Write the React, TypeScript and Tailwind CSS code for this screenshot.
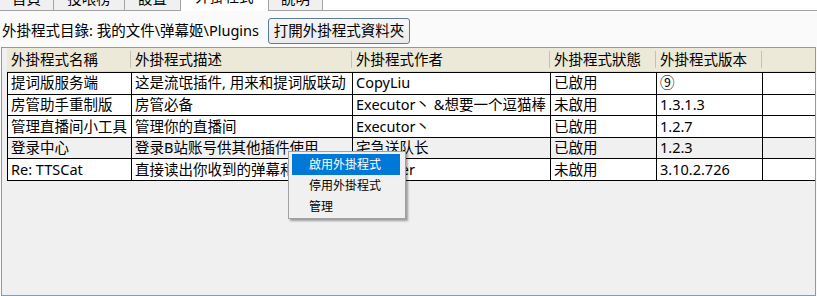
import type { ReactNode } from 'react'

const cols = 'grid-cols-[124px_221px_198px_106px_106px_1fr]'

const tabs = [
  { label: '首頁', w: 'w-[54px]' },
  { label: '投喂榜', w: 'w-[71px]' },
  { label: '設置', w: 'w-[56px]' },
  { label: '外掛程式', w: 'w-[88px]', active: true },
  { label: '說明', w: 'w-[54px]' },
]

const headers = ['外掛程式名稱', '外掛程式描述', '外掛程式作者', '外掛程式狀態', '外掛程式版本']

const plugins = [
  ['提词版服务端', '这是流氓插件, 用来和提词版联动', 'CopyLiu', '已啟用', '⑨'],
  ['房管助手重制版', '房管必备', 'Executor丶 &想要一个逗猫棒', '未啟用', '1.3.1.3'],
  ['管理直播间小工具', '管理你的直播间', 'Executor丶', '已啟用', '1.2.7'],
  ['登录中心', '登录B站账号供其他插件使用', '宅急送队长', '已啟用', '1.2.3'],
  ['Re: TTSCat', '直接读出你收到的弹幕和礼物', 'Elepover', '未啟用', '3.10.2.726'],
]

function Cell({ children, last }: { children?: ReactNode; last?: boolean }) {
  return (
    <div
      className={`flex items-center overflow-hidden whitespace-nowrap pl-[3px] ${last ? '' : 'border-r border-black'}`}
    >
      {children}
    </div>
  )
}

export default function App() {
  return (
    <div className="relative flex h-[296px] w-[817px] flex-col overflow-hidden bg-white font-['Noto_Sans','Noto_Sans_CJK_SC',sans-serif] text-[14.5px] text-black">
      {/* tab strip, only the bottom of it is on screen */}
      <div className="flex h-[11px] shrink-0 items-end overflow-hidden">
        {tabs.map((t) =>
          t.active ? (
            <div
              key={t.label}
              className={`${t.w} flex h-[26px] shrink-0 items-center justify-center border-r border-[#a3a3a3] bg-white pb-[3px]`}
            >
              {t.label}
            </div>
          ) : (
            <div
              key={t.label}
              className={`${t.w} flex h-[26px] shrink-0 items-center justify-center border-b border-r border-[#a3a3a3] bg-[#f0f0f0] pt-[3px]`}
            >
              {t.label}
            </div>
          ),
        )}
        <div className="h-full flex-1 border-b border-[#a3a3a3]" />
      </div>

      <div className="flex flex-1 flex-col bg-[#fafafb]">
        <div className="flex items-center pb-[3px] pl-[2px] pt-[7px]">
          <span className="w-[266px] shrink-0 whitespace-nowrap">外掛程式目錄: 我的文件\弹幕姬\Plugins</span>
          <button
            type="button"
            className="flex h-[26px] w-[142px] shrink-0 items-center justify-center whitespace-nowrap rounded-[3px] border border-[#5c7a99] bg-gradient-to-b from-[#f6f6f6] to-[#ebebeb]"
          >
            打開外掛程式資料夾
          </button>
        </div>

        <div className="mx-px flex-1 border border-[#7f9db9] bg-[#f0f0f0]">
          <div className={`ml-[5px] grid h-[24px] ${cols} border-b border-[#dcd8c8] bg-[#ece9d8]`}>
            {headers.map((h) => (
              <div key={h} className="flex items-center justify-between whitespace-nowrap">
                <span className="pl-[4px]">{h}</span>
                <span className="h-[17px] w-px bg-[#c5c2b2]" />
              </div>
            ))}
            <div />
          </div>

          <div className="ml-[5px] border-b border-l border-black">
            {plugins.map((p, i) => (
              <div
                key={p[0]}
                className={`grid h-[21.6px] ${cols} border-t border-black ${i === 3 ? 'bg-[#f0f0f0]' : 'bg-white'}`}
              >
                {p.map((v, j) => (
                  <Cell key={j}>{v}</Cell>
                ))}
                <Cell last />
              </div>
            ))}
          </div>
        </div>
      </div>

      {/* context menu */}
      <div className="absolute left-[288px] top-[151px] w-[118px] border border-[#a0a0a0] bg-[#f0f0f0] pb-px pt-[2px] text-[12px] shadow-[2px_2px_2px_rgba(0,0,0,0.35)]">
        <div className="ml-[3px] mr-[5px] flex h-[21px] items-center bg-[#0078d7] pl-[17px] text-white">啟用外掛程式</div>
        <div className="ml-[3px] mr-[5px] flex h-[21px] items-center pl-[17px]">停用外掛程式</div>
        <div className="ml-[3px] mr-[5px] flex h-[21px] items-center pl-[17px]">管理</div>
      </div>
    </div>
  )
}
